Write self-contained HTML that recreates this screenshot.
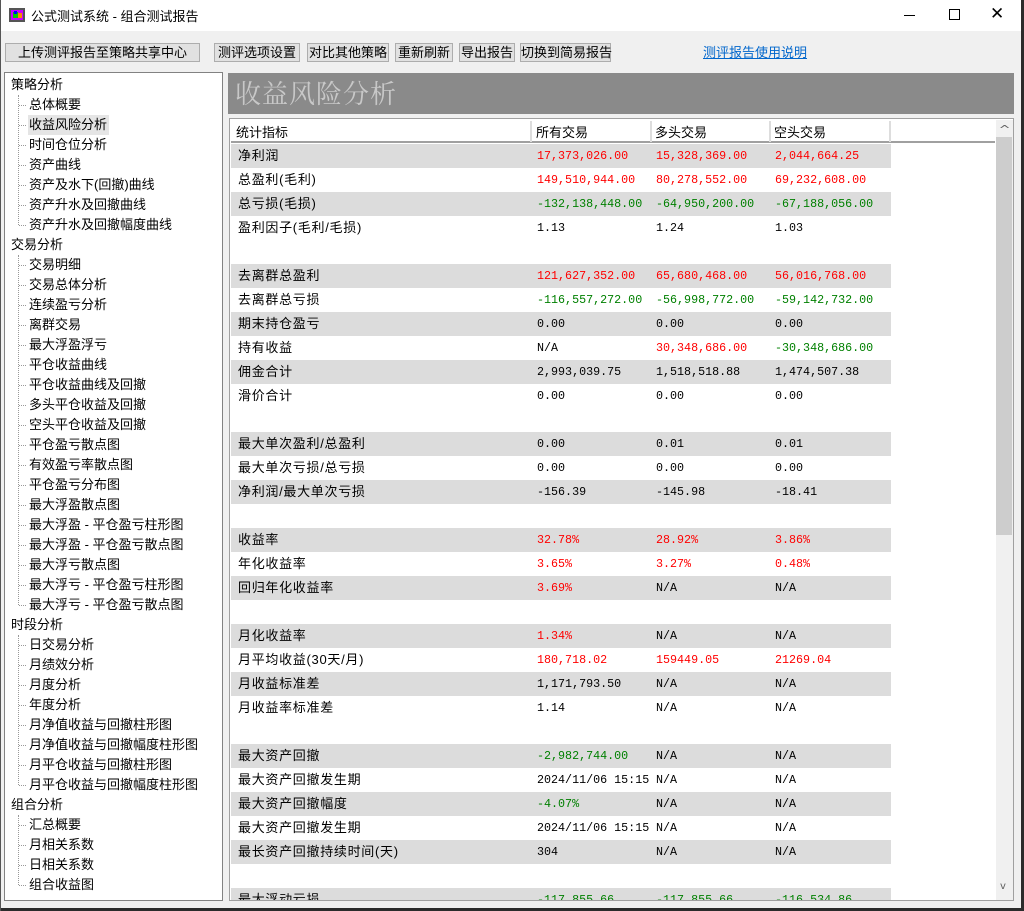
<!DOCTYPE html>
<html><head><meta charset="utf-8"><style>
*{margin:0;padding:0;box-sizing:border-box}
body{width:1024px;height:911px;overflow:hidden;background:#f0f0f0;font-family:"Liberation Sans","Noto Sans CJK SC",sans-serif;font-size:13px;color:#000;position:relative}
.abs{position:absolute}
#title{left:0;top:0;width:1024px;height:31px;background:#fff}
.btn{position:absolute;top:43px;height:19px;border:1px solid #adadad;background:#e1e1e1;font-size:13px;line-height:17px;text-align:center;white-space:nowrap}
#tree{left:4px;top:72px;width:219px;height:829px;background:#fff;border:1px solid #828282;overflow:hidden}
.ti{position:absolute;height:20px;line-height:20px;white-space:nowrap;font-size:13px}
.vl{position:absolute;border-left:1px dotted #999;width:0}
.hl{position:absolute;border-top:1px dotted #999;width:7px;height:0}
#hdr{left:228px;top:73px;width:786px;height:41px;background:#8a8a8a;color:#c8c8c8;font-family:"Noto Serif CJK SC","Liberation Serif",serif;font-size:26px;line-height:40px;padding-left:7px;letter-spacing:1px}
#panel{left:229px;top:118px;width:785px;height:783px;background:#fff;border:1px solid #a0a0a0;overflow:hidden}
.row{position:absolute;left:1px;width:660px;height:24px;line-height:24px;white-space:nowrap}
.row .c:first-child{letter-spacing:0.7px}
.g{background:#dcdcdc}
.c{position:absolute;top:0}
.n{font-family:"Liberation Mono",monospace;font-size:11.7px;letter-spacing:0 !important}
.r{color:#ff0000}.gr{color:#008000}
</style></head><body>
<div id="title" class="abs">
<svg class="abs" style="left:9px;top:7px" width="16" height="16"><rect x="0" y="1" width="16" height="14" fill="#555"/><rect x="2" y="3" width="12" height="10" fill="#c0f"/><rect x="4" y="5" width="5" height="6" fill="#0c0"/><rect x="9" y="6" width="4" height="5" fill="#f80"/><rect x="5" y="4" width="3" height="3" fill="#00f"/></svg>
<div class="abs" style="left:31px;top:6px;font-size:13px">公式测试系统 - 组合测试报告</div>
<div class="abs" style="left:904px;top:15px;width:11px;border-top:1px solid #000"></div>
<div class="abs" style="left:949px;top:9px;width:11px;height:11px;border:1px solid #000"></div>
<div class="abs" style="left:990px;top:4px;font-size:17px;font-family:'DejaVu Sans',sans-serif">✕</div>
</div>
<div class="abs" style="left:1021px;top:0;width:3px;height:911px;background:#2b2b2b"></div>
<div class="abs" style="left:0;top:908px;width:1024px;height:3px;background:#2b2b2b"></div>
<div class="abs" style="left:0;top:0;width:1px;height:911px;background:#555"></div>

<div class="btn" style="left:5px;width:195px">上传测评报告至策略共享中心</div>
<div class="btn" style="left:214px;width:86px">测评选项设置</div>
<div class="btn" style="left:307px;width:82px">对比其他策略</div>
<div class="btn" style="left:395px;width:58px">重新刷新</div>
<div class="btn" style="left:459px;width:56px">导出报告</div>
<div class="btn" style="left:520px;width:91px">切换到简易报告</div>
<div class="abs" style="left:703px;top:42px;color:#0066cc;text-decoration:underline;font-size:13px">测评报告使用说明</div>

<div id="tree" class="abs">
<div class="ti" style="left:6px;top:2px">策略分析</div>
<div class="vl" style="left:13px;top:22px;height:130px"></div>
<div class="ti" style="left:6px;top:162px">交易分析</div>
<div class="vl" style="left:13px;top:182px;height:350px"></div>
<div class="ti" style="left:6px;top:542px">时段分析</div>
<div class="vl" style="left:13px;top:562px;height:150px"></div>
<div class="ti" style="left:6px;top:722px">组合分析</div>
<div class="vl" style="left:13px;top:742px;height:70px"></div>
<div class="ti" style="left:24px;top:22px">总体概要</div>
<div class="ti" style="left:23px;top:42px;background:#e5e5e5;padding:0 2px 0 1px">收益风险分析</div>
<div class="ti" style="left:24px;top:62px">时间仓位分析</div>
<div class="ti" style="left:24px;top:82px">资产曲线</div>
<div class="ti" style="left:24px;top:102px">资产及水下(回撤)曲线</div>
<div class="ti" style="left:24px;top:122px">资产升水及回撤曲线</div>
<div class="ti" style="left:24px;top:142px">资产升水及回撤幅度曲线</div>
<div class="ti" style="left:24px;top:182px">交易明细</div>
<div class="ti" style="left:24px;top:202px">交易总体分析</div>
<div class="ti" style="left:24px;top:222px">连续盈亏分析</div>
<div class="ti" style="left:24px;top:242px">离群交易</div>
<div class="ti" style="left:24px;top:262px">最大浮盈浮亏</div>
<div class="ti" style="left:24px;top:282px">平仓收益曲线</div>
<div class="ti" style="left:24px;top:302px">平仓收益曲线及回撤</div>
<div class="ti" style="left:24px;top:322px">多头平仓收益及回撤</div>
<div class="ti" style="left:24px;top:342px">空头平仓收益及回撤</div>
<div class="ti" style="left:24px;top:362px">平仓盈亏散点图</div>
<div class="ti" style="left:24px;top:382px">有效盈亏率散点图</div>
<div class="ti" style="left:24px;top:402px">平仓盈亏分布图</div>
<div class="ti" style="left:24px;top:422px">最大浮盈散点图</div>
<div class="ti" style="left:24px;top:442px">最大浮盈 - 平仓盈亏柱形图</div>
<div class="ti" style="left:24px;top:462px">最大浮盈 - 平仓盈亏散点图</div>
<div class="ti" style="left:24px;top:482px">最大浮亏散点图</div>
<div class="ti" style="left:24px;top:502px">最大浮亏 - 平仓盈亏柱形图</div>
<div class="ti" style="left:24px;top:522px">最大浮亏 - 平仓盈亏散点图</div>
<div class="ti" style="left:24px;top:562px">日交易分析</div>
<div class="ti" style="left:24px;top:582px">月绩效分析</div>
<div class="ti" style="left:24px;top:602px">月度分析</div>
<div class="ti" style="left:24px;top:622px">年度分析</div>
<div class="ti" style="left:24px;top:642px">月净值收益与回撤柱形图</div>
<div class="ti" style="left:24px;top:662px">月净值收益与回撤幅度柱形图</div>
<div class="ti" style="left:24px;top:682px">月平仓收益与回撤柱形图</div>
<div class="ti" style="left:24px;top:702px">月平仓收益与回撤幅度柱形图</div>
<div class="ti" style="left:24px;top:742px">汇总概要</div>
<div class="ti" style="left:24px;top:762px">月相关系数</div>
<div class="ti" style="left:24px;top:782px">日相关系数</div>
<div class="ti" style="left:24px;top:802px">组合收益图</div>
<div class="hl" style="left:14px;top:32px"></div><div class="hl" style="left:14px;top:52px"></div><div class="hl" style="left:14px;top:72px"></div><div class="hl" style="left:14px;top:92px"></div><div class="hl" style="left:14px;top:112px"></div><div class="hl" style="left:14px;top:132px"></div><div class="hl" style="left:14px;top:152px"></div>
<div class="hl" style="left:14px;top:192px"></div><div class="hl" style="left:14px;top:212px"></div><div class="hl" style="left:14px;top:232px"></div><div class="hl" style="left:14px;top:252px"></div><div class="hl" style="left:14px;top:272px"></div><div class="hl" style="left:14px;top:292px"></div><div class="hl" style="left:14px;top:312px"></div><div class="hl" style="left:14px;top:332px"></div><div class="hl" style="left:14px;top:352px"></div><div class="hl" style="left:14px;top:372px"></div><div class="hl" style="left:14px;top:392px"></div><div class="hl" style="left:14px;top:412px"></div><div class="hl" style="left:14px;top:432px"></div><div class="hl" style="left:14px;top:452px"></div><div class="hl" style="left:14px;top:472px"></div><div class="hl" style="left:14px;top:492px"></div><div class="hl" style="left:14px;top:512px"></div><div class="hl" style="left:14px;top:532px"></div>
<div class="hl" style="left:14px;top:572px"></div><div class="hl" style="left:14px;top:592px"></div><div class="hl" style="left:14px;top:612px"></div><div class="hl" style="left:14px;top:632px"></div><div class="hl" style="left:14px;top:652px"></div><div class="hl" style="left:14px;top:672px"></div><div class="hl" style="left:14px;top:692px"></div><div class="hl" style="left:14px;top:712px"></div>
<div class="hl" style="left:14px;top:752px"></div><div class="hl" style="left:14px;top:772px"></div><div class="hl" style="left:14px;top:792px"></div><div class="hl" style="left:14px;top:812px"></div>
</div>

<div id="hdr" class="abs">收益风险分析</div>

<div id="panel" class="abs">
<div class="abs" style="left:1px;top:1px;width:764px;height:23px;background:#fff;border-bottom:2px solid #a0a0a0"></div>
<div class="abs" style="left:6px;top:3px">统计指标</div>
<div class="abs" style="left:300px;top:2px;width:2px;height:21px;background:#ddd"></div>
<div class="abs" style="left:306px;top:3px">所有交易</div>
<div class="abs" style="left:420px;top:2px;width:2px;height:21px;background:#ddd"></div>
<div class="abs" style="left:425px;top:3px">多头交易</div>
<div class="abs" style="left:539px;top:2px;width:2px;height:21px;background:#ddd"></div>
<div class="abs" style="left:544px;top:3px">空头交易</div>
<div class="abs" style="left:659px;top:2px;width:2px;height:21px;background:#ddd"></div>
<div class="abs" style="left:766px;top:1px;width:17px;height:781px;background:#f0f0f0"></div>
<div class="abs" style="left:770px;top:4px;font-size:11px;color:#606060;font-family:'DejaVu Sans',sans-serif;transform:scaleX(1.3)">^</div>
<div class="abs" style="left:766px;top:18px;width:16px;height:398px;background:#cdcdcd"></div>
<div class="abs" style="left:770px;top:762px;font-size:10px;color:#606060;font-family:'DejaVu Sans',sans-serif">v</div>
<div id="rows">
<div class="row g" style="top:25px"><span class="c" style="left:7px">净利润</span><span class="c n r" style="left:306px">17,373,026.00</span><span class="c n r" style="left:425px">15,328,369.00</span><span class="c n r" style="left:544px">2,044,664.25</span></div>
<div class="row" style="top:49px"><span class="c" style="left:7px">总盈利(毛利)</span><span class="c n r" style="left:306px">149,510,944.00</span><span class="c n r" style="left:425px">80,278,552.00</span><span class="c n r" style="left:544px">69,232,608.00</span></div>
<div class="row g" style="top:73px"><span class="c" style="left:7px">总亏损(毛损)</span><span class="c n gr" style="left:306px">-132,138,448.00</span><span class="c n gr" style="left:425px">-64,950,200.00</span><span class="c n gr" style="left:544px">-67,188,056.00</span></div>
<div class="row" style="top:97px"><span class="c" style="left:7px">盈利因子(毛利/毛损)</span><span class="c n" style="left:306px">1.13</span><span class="c n" style="left:425px">1.24</span><span class="c n" style="left:544px">1.03</span></div>

<div class="row g" style="top:145px"><span class="c" style="left:7px">去离群总盈利</span><span class="c n r" style="left:306px">121,627,352.00</span><span class="c n r" style="left:425px">65,680,468.00</span><span class="c n r" style="left:544px">56,016,768.00</span></div>
<div class="row" style="top:169px"><span class="c" style="left:7px">去离群总亏损</span><span class="c n gr" style="left:306px">-116,557,272.00</span><span class="c n gr" style="left:425px">-56,998,772.00</span><span class="c n gr" style="left:544px">-59,142,732.00</span></div>
<div class="row g" style="top:193px"><span class="c" style="left:7px">期末持仓盈亏</span><span class="c n" style="left:306px">0.00</span><span class="c n" style="left:425px">0.00</span><span class="c n" style="left:544px">0.00</span></div>
<div class="row" style="top:217px"><span class="c" style="left:7px">持有收益</span><span class="c n" style="left:306px">N/A</span><span class="c n r" style="left:425px">30,348,686.00</span><span class="c n gr" style="left:544px">-30,348,686.00</span></div>
<div class="row g" style="top:241px"><span class="c" style="left:7px">佣金合计</span><span class="c n" style="left:306px">2,993,039.75</span><span class="c n" style="left:425px">1,518,518.88</span><span class="c n" style="left:544px">1,474,507.38</span></div>
<div class="row" style="top:265px"><span class="c" style="left:7px">滑价合计</span><span class="c n" style="left:306px">0.00</span><span class="c n" style="left:425px">0.00</span><span class="c n" style="left:544px">0.00</span></div>

<div class="row g" style="top:313px"><span class="c" style="left:7px">最大单次盈利/总盈利</span><span class="c n" style="left:306px">0.00</span><span class="c n" style="left:425px">0.01</span><span class="c n" style="left:544px">0.01</span></div>
<div class="row" style="top:337px"><span class="c" style="left:7px">最大单次亏损/总亏损</span><span class="c n" style="left:306px">0.00</span><span class="c n" style="left:425px">0.00</span><span class="c n" style="left:544px">0.00</span></div>
<div class="row g" style="top:361px"><span class="c" style="left:7px">净利润/最大单次亏损</span><span class="c n" style="left:306px">-156.39</span><span class="c n" style="left:425px">-145.98</span><span class="c n" style="left:544px">-18.41</span></div>

<div class="row g" style="top:409px"><span class="c" style="left:7px">收益率</span><span class="c n r" style="left:306px">32.78%</span><span class="c n r" style="left:425px">28.92%</span><span class="c n r" style="left:544px">3.86%</span></div>
<div class="row" style="top:433px"><span class="c" style="left:7px">年化收益率</span><span class="c n r" style="left:306px">3.65%</span><span class="c n r" style="left:425px">3.27%</span><span class="c n r" style="left:544px">0.48%</span></div>
<div class="row g" style="top:457px"><span class="c" style="left:7px">回归年化收益率</span><span class="c n r" style="left:306px">3.69%</span><span class="c n" style="left:425px">N/A</span><span class="c n" style="left:544px">N/A</span></div>

<div class="row g" style="top:505px"><span class="c" style="left:7px">月化收益率</span><span class="c n r" style="left:306px">1.34%</span><span class="c n" style="left:425px">N/A</span><span class="c n" style="left:544px">N/A</span></div>
<div class="row" style="top:529px"><span class="c" style="left:7px">月平均收益(30天/月)</span><span class="c n r" style="left:306px">180,718.02</span><span class="c n r" style="left:425px">159449.05</span><span class="c n r" style="left:544px">21269.04</span></div>
<div class="row g" style="top:553px"><span class="c" style="left:7px">月收益标准差</span><span class="c n" style="left:306px">1,171,793.50</span><span class="c n" style="left:425px">N/A</span><span class="c n" style="left:544px">N/A</span></div>
<div class="row" style="top:577px"><span class="c" style="left:7px">月收益率标准差</span><span class="c n" style="left:306px">1.14</span><span class="c n" style="left:425px">N/A</span><span class="c n" style="left:544px">N/A</span></div>

<div class="row g" style="top:625px"><span class="c" style="left:7px">最大资产回撤</span><span class="c n gr" style="left:306px">-2,982,744.00</span><span class="c n" style="left:425px">N/A</span><span class="c n" style="left:544px">N/A</span></div>
<div class="row" style="top:649px"><span class="c" style="left:7px">最大资产回撤发生期</span><span class="c n" style="left:306px">2024/11/06 15:15</span><span class="c n" style="left:425px">N/A</span><span class="c n" style="left:544px">N/A</span></div>
<div class="row g" style="top:673px"><span class="c" style="left:7px">最大资产回撤幅度</span><span class="c n gr" style="left:306px">-4.07%</span><span class="c n" style="left:425px">N/A</span><span class="c n" style="left:544px">N/A</span></div>
<div class="row" style="top:697px"><span class="c" style="left:7px">最大资产回撤发生期</span><span class="c n" style="left:306px">2024/11/06 15:15</span><span class="c n" style="left:425px">N/A</span><span class="c n" style="left:544px">N/A</span></div>
<div class="row g" style="top:721px"><span class="c" style="left:7px">最长资产回撤持续时间(天)</span><span class="c n" style="left:306px">304</span><span class="c n" style="left:425px">N/A</span><span class="c n" style="left:544px">N/A</span></div>

<div class="row g" style="top:769px"><span class="c" style="left:7px">最大浮动亏损</span><span class="c n gr" style="left:306px">-117,855.66</span><span class="c n gr" style="left:425px">-117,855.66</span><span class="c n gr" style="left:544px">-116,534.86</span></div>
</div>
</div>
</body></html>
